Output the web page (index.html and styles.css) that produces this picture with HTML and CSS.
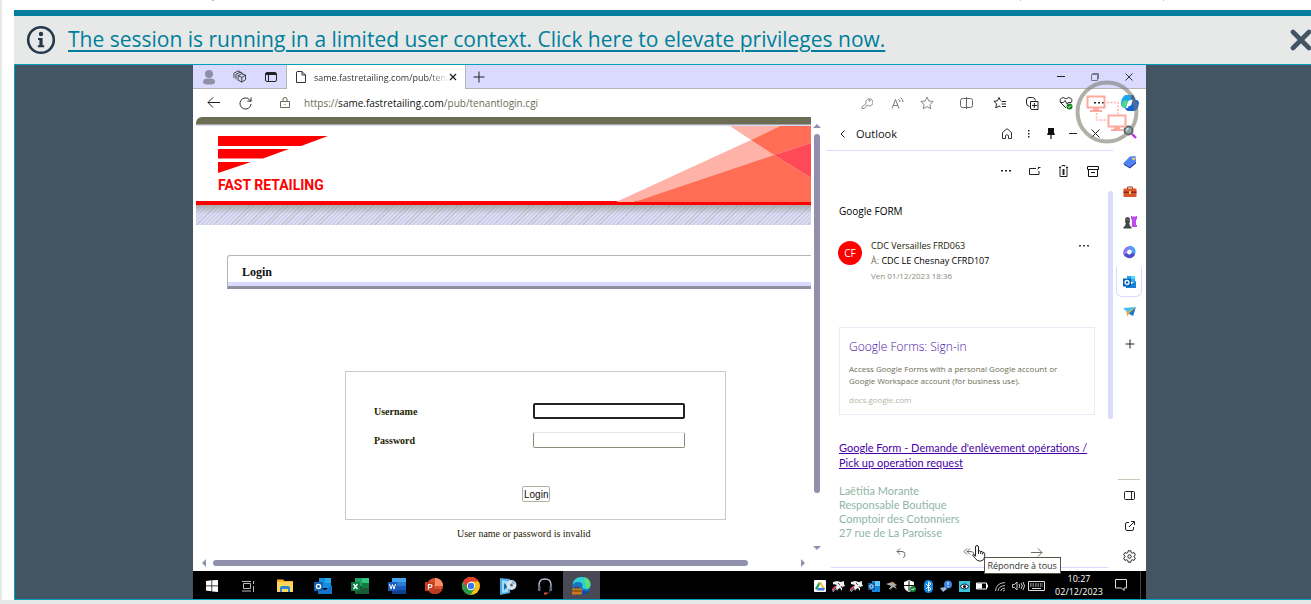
FILE: index.html
```
<!DOCTYPE html>
<html lang="en">
<head>
<meta charset="utf-8">
<meta name="viewport" content="width=device-width, initial-scale=1">
<title>Remote support session</title>
<link rel="stylesheet" href="styles.css">
</head>
<body>
<div class="console">
  <div class="topstrip"></div>
  <div class="banner">
    <svg class="info" width="30" height="30" viewBox="0 0 30 30"><circle cx="15" cy="15" r="12.8" fill="none" stroke="#22394c" stroke-width="2.6"/><circle cx="15" cy="9" r="2.2" fill="#22394c"/><path d="M12 13h4.6v7.2h1.6v2H11.8v-2h1.6V15H12z" fill="#22394c"/></svg>
    <a href="#elevate">The session is running in a limited user context. Click here to elevate privileges now.</a>
    <button class="close" aria-label="Close"><svg width="22" height="22" viewBox="0 0 22 22"><path d="M3 3l16 16M19 3L3 19" stroke="#435563" stroke-width="4.6" stroke-linecap="round"/></svg></button>
  </div>
  <div class="viewer">
    <div class="remote">
      <div class="tabbar">
        <button class="slot tabslot" aria-label="Profile"><svg width="14" height="16" viewBox="0 0 14 16" fill="#8f8fa8"><circle cx="7" cy="5" r="4"/><path d="M1 13c0-3 2-3.500 6-3.500s6 .5 6 3.500c0 2-2 2.500-6 2.500S1 15 1 13z"/></svg></button>
        <button class="slot tabslot" aria-label="Workspaces"><svg width="13" height="13" viewBox="0 0 14 14" fill="none" stroke="#333"><path d="M5.500 6L9.500 4l4 1.500v5L9.500 13l-4-2zM5.500 6l4 2v5M9.500 8l4-2.500M3.200 10V4.700L7.500 2.500l3 1M1 8.500V3.500L5.500 1l2.500.8"/></svg></button>
        <button class="slot tabslot" aria-label="Tab actions"><svg width="12" height="12" viewBox="0 0 12 12" fill="none" stroke="#222"><rect x=".5" y="1.500" width="11" height="9" rx="1.500"/><path d="M1 3h10" stroke-width="2"/><path d="M3.500 3v7.500"/></svg></button>
        <div class="tab">
          <svg width="10" height="12" viewBox="0 0 10 12" fill="none" stroke="#333"><path d="M1 .5h5L9.500 4v7.500H.5V1zM6 .5V4h3.500"/></svg>
          <span class="tabtitle">same.fastretailing.com/pub/tena</span>
          <button class="plain" aria-label="Close tab"><svg width="8" height="8" viewBox="0 0 8 8" stroke="#222" stroke-width="1.300"><path d="M1 1l6 6M7 1L1 7"/></svg></button>
        </div>
        <button class="slot newtab" aria-label="New tab"><svg width="12" height="12" viewBox="0 0 12 12" stroke="#222"><path d="M6 .5v11M.5 6h11"/></svg></button>
        <div class="push"></div>
        <button class="slot win" aria-label="Minimize"><svg width="8" height="8" viewBox="0 0 8 8" stroke="#222"><path d="M0 3.500h8"/></svg></button>
        <button class="slot win" aria-label="Restore"><svg width="8" height="8" viewBox="0 0 8 8" fill="none" stroke="#77778c"><path d="M.5 1.500h6v6h-6zM1.500 .5h6V6"/></svg></button>
        <button class="slot win" aria-label="Close window"><svg width="8" height="8" viewBox="0 0 8 8" stroke="#333"><path d="M.5 .5l7 7M7.500 .5l-7 7"/></svg></button>
      </div>
      <div class="toolbar">
        <button class="slot nav" aria-label="Back"><svg width="13" height="12" viewBox="0 0 13 12" fill="none" stroke="#222"><path d="M13 5.500H1M6 .5L1 5.500l5 5"/></svg></button>
        <button class="slot nav" aria-label="Reload"><svg width="13" height="13" viewBox="0 0 14 14" fill="none" stroke="#222"><path d="M13 7.500A6 6 0 1 1 11.500 3L13 4.500M13 .5v4H9"/></svg></button>
        <span class="slot lock"><svg width="10" height="12" viewBox="0 0 10 12" fill="none" stroke="#6d6d55"><path d="M.5 4.500h9v6h-9zM3 4.500V2q0-1.500 2-1.500T7 2v2.500M4.500 7.500h1"/></svg></span>
        <span class="url">https://<b>same.fastretailing.com</b>/pub/tenantlogin.cgi</span>
        <div class="push"></div>
        <button class="slot t30" aria-label="Passwords"><svg width="12" height="12" viewBox="0 0 12 12" fill="none" stroke="#8c8c80"><path d="M5 6.500L1 10v1.500h2.500L6 8a3.600 3.600 0 1 0-1-1.500z"/><circle cx="8.500" cy="3.500" r=".7"/></svg></button>
        <button class="slot t30" aria-label="Read aloud"><svg width="13" height="12" viewBox="0 0 13 12" fill="none" stroke="#777"><path d="M1 11.500L4.500 2.500 8 11.500M2.200 8.500h4.600M7.500 2q1.500 1 1.500 3M9.500 .5Q12 2 12 5"/></svg></button>
        <button class="slot t30" aria-label="Favorite"><svg width="14" height="14" viewBox="0 0 14 14" fill="none" stroke="#888"><path d="M7 1l1.800 4 4.400.5-3.300 3 .9 4.300L7 10.600l-3.800 2.200.9-4.300-3.300-3L5.200 5z"/></svg></button>
        <div class="toolgap"></div>
        <button class="slot t33" aria-label="Split screen"><svg width="13" height="12" viewBox="0 0 13 12" fill="none" stroke="#666"><path d="M6.500 1.500h-4q-2 0-2 2v5q0 2 2 2h4M6.500 1.500h4q2 0 2 2v5q0 2-2 2h-4M6.500 0v12"/></svg></button>
        <button class="slot t33" aria-label="Favorites"><svg width="14" height="14" viewBox="0 0 14 14" fill="none" stroke="#222"><path d="M8.500 5.500h4.500M8.500 8h4.500M9 10.500h4M7.500 4.500L6 1.500 4.500 4.800 1 5.300l2.500 2.600-.7 4L6 10l1.500.8"/></svg></button>
        <button class="slot t33" aria-label="Collections"><svg width="13" height="13" viewBox="0 0 13 13" fill="none" stroke="#222"><path d="M3.500 9.500Q.5 9 .5 6V3q0-2.500 2.500-2.500h3.500Q9 .5 9.500 3.500M4.500 4.500h7.500v8H6q-1.500 0-1.500-1.500zM8.300 6v5M6 8.500h5"/></svg></button>
        <button class="slot t33" aria-label="Browser essentials"><svg width="14" height="14" viewBox="0 0 14 14" fill="none" stroke="#333"><path d="M7 12L1.500 6.500Q0 3.500 2.500 2 5 .8 7 3q2-2.200 4.500-1Q14 3.500 12.500 6.500M1 6.500h3.500L6 4.500 8 8l1-1.500h3"/><circle cx="10.500" cy="10.500" r="3" fill="#12841c" stroke="none"/><path d="M9 10.500l1 1 2-2" stroke="#fff"/></svg></button>
        <button class="slot t33" aria-label="More"><svg width="12" height="4" viewBox="0 0 12 4" fill="#222"><path d="M1 1h2v1.500H1zM5 1h2v1.500H5zM9 1h2v1.500H9z"/></svg></button>
        <button class="slot side" aria-label="Copilot"><svg width="18" height="16" viewBox="0 0 18 16"><path d="M4 0h7q2 0 2.500 2L15 6H7L5 13Q0 13 0 9q0-6 4-9z" fill="#1aa7ec"/><path d="M3 5l4 1-2 6q-4 1-5-2z" fill="#52d68b"/><path d="M9 5h7q2 1 2 3-1 8-5 8H7q-2 0-3-3h3z" fill="#1663d6"/><path d="M8 5.500l4-1-2 6-4 1z" fill="#fff"/><path d="M11 0q2 0 3 5l-4-1z" fill="#123ea8"/></svg></button>
      </div>
      <div class="main">
        <div class="webcol">
          <div class="webrow">
            <div class="web">
              <div class="olive"></div>
              <div class="brand">
                <div class="logo">
                  <svg width="110" height="37" viewBox="0 0 110 37" fill="#fe0000"><path d="M0 0h110L83 10H0zM0 13h71L45 22.500H0zM0 26h33L0 37z"/></svg>
                  <span>FAST RETAILING</span>
                </div>
                <svg class="art" width="195" height="76" viewBox="0 0 195 76"><path d="M0 76L135 14l23 15L18 76zM114 0h50l-29 14z" fill="#ffb3a8"/><path d="M135 14l29-14h31v17l-37 12zM18 76l140-47 37 23v24z" fill="#ff6d55"/><path d="M158 29l37-12v35z" fill="#ff4957"/></svg>
              </div>
              <div class="redline"></div>
              <div class="hatch"></div>
              <h1 class="heading">Login</h1>
              <form class="login">
                <label for="user">Username</label><input id="user" class="focus" type="text">
                <label for="pass">Password</label><input id="pass" type="password">
                <button type="button">Login</button>
              </form>
              <p class="error">User name or password is invalid</p>
            </div>
            <div class="vscroll"><svg width="8" height="4" viewBox="0 0 8 4"><path d="M4 0l4 4H0z" fill="#9090ad"/></svg><div class="vthumb"></div><svg width="8" height="4" viewBox="0 0 8 4"><path d="M0 0h8L4 4z" fill="#9090ad"/></svg></div>
          </div>
          <div class="hscroll"><svg width="4" height="8" viewBox="0 0 4 8"><path d="M4 0v8L0 4z" fill="#9090ad"/></svg><div class="hthumb"></div><svg width="4" height="8" viewBox="0 0 4 8"><path d="M0 0l4 4-4 4z" fill="#9090ad"/></svg></div>
        </div>
        <section class="outlook">
          <header class="ohead">
            <button class="slot o22" aria-label="Back"><svg width="5" height="8" viewBox="0 0 5 8" fill="none" stroke="#222"><path d="M4.500 .5L1 4l3.500 3.500"/></svg></button>
            <span class="otitle">Outlook</span>
            <div class="push"></div>
            <button class="slot o22" aria-label="Home"><svg width="10" height="11" viewBox="0 0 10 11" fill="none" stroke="#333"><path d="M.5 4.500L5 .7l4.500 3.800v6h-3V7.500Q5 6 3.500 7.500v3h-3z"/></svg></button>
            <button class="slot o22" aria-label="Menu"><svg width="2" height="8" viewBox="0 0 2 8" fill="#222"><path d="M0 0h1.500v1.500H0zM0 3h1.500v1.500H0zM0 6h1.500v1.500H0z"/></svg></button>
            <button class="slot o22" aria-label="Pin"><svg width="8" height="11" viewBox="0 0 8 11"><path d="M1 0h6v4.500l1 2.500H4.600v4H3.400V7H0l1-2.500z" fill="#111"/></svg></button>
            <button class="slot o22" aria-label="Minimize pane"><svg width="8" height="8" viewBox="0 0 8 8" stroke="#222"><path d="M0 3.500h8"/></svg></button>
            <button class="slot o22" aria-label="Close pane"><svg width="9" height="9" viewBox="0 0 9 9" stroke="#222"><path d="M.5 .5l8 8M8.500 .5l-8 8"/></svg></button>
          </header>
          <div class="oacts">
            <button class="slot o29" aria-label="More"><svg width="10" height="2" viewBox="0 0 10 2" fill="#222"><path d="M0 0h2v1.500H0zM4 0h2v1.500H4zM8 0h2v1.500H8z"/></svg></button>
            <button class="slot o29" aria-label="Open in window"><svg width="12" height="10" viewBox="0 0 12 10" fill="none" stroke="#222"><path d="M7 2.500H.5v6h9.500V5M8.500 3.500l2-2M9 1.500h2.500"/></svg></button>
            <button class="slot o29" aria-label="Delete"><svg width="9" height="12" viewBox="0 0 9 12" fill="none" stroke="#222"><path d="M1 1.500v10h7v-10M0 2.500h2M7 2.500h2M3 1.500V.5h3v1"/><path d="M4.500 4v6" stroke-width="2"/></svg></button>
            <button class="slot o29" aria-label="Archive"><svg width="12" height="11" viewBox="0 0 12 11" fill="none" stroke="#111"><path d="M.5 .5h11v3H.5zM1.500 3.500v7h9v-7M4 6.500h4"/></svg></button>
          </div>
          <div class="obody">
            <div class="mail">
              <h2>Google FORM</h2>
              <div class="sender">
                <span class="avatar">CF</span>
                <div class="who"><div>CDC Versailles FRD063</div><div class="to"><span>À:</span> CDC LE Chesnay CFRD107</div><div class="date">Ven 01/12/2023 18:36</div></div>
                <button class="plain dots" aria-label="Message actions"><svg width="10" height="2" viewBox="0 0 10 2" fill="#444"><path d="M0 0h2v1.500H0zM4 0h2v1.500H4zM8 0h2v1.500H8z"/></svg></button>
              </div>
              <article class="card">
                <h3>Google Forms: Sign-in</h3>
                <p>Access Google Forms with a personal Google account or Google Workspace account (for business use).</p>
                <small>docs.google.com</small>
              </article>
              <a class="formlink" href="#form">Google Form - Demande d'enlèvement opérations / Pick up operation request</a>
              <div class="sign">Laëtitia Morante<br>Responsable Boutique<br>Comptoir des Cotonniers<br>27 rue de La Paroisse</div>
            </div>
            <div class="othumb"></div>
          </div>
          <footer class="ofoot">
            <button class="plain" aria-label="Reply"><svg width="10" height="10" viewBox="0 0 10 10" fill="none" stroke="#6d6d60"><path d="M4 .5L1 3.500l3 3M1 3.500h5q3 0 3 3T7 9.500"/></svg></button>
            <div class="replyall"><button class="plain" aria-label="Reply all"><svg width="12" height="10" viewBox="0 0 12 10" fill="none" stroke="#6d6d60"><path d="M4 .5L1 3.500l3 3M7 .5L4 3.500l3 3M4 3.500h4q3 0 3.500 4"/></svg></button>
              <svg class="hand" width="15" height="17" viewBox="0 0 15 17"><path d="M4.500 11V2q0-1.500 1.500-1.500T7.500 2v4q1.500-.8 2.200.5 1.600-.5 2 .8 1.800-.3 2 1.200v3q0 4-4 4.500H8q-2 0-3.500-2.500L1.500 10q0-1.500 3 1z" fill="#fff" stroke="#222"/><path d="M7.500 6v3M9.700 6.500V9M11.700 7.500V9.500" stroke="#222"/></svg>
              <span class="tip" role="tooltip">Répondre à tous</span>
            </div>
            <button class="plain" aria-label="Forward"><svg width="12" height="10" viewBox="0 0 12 10" fill="none" stroke="#6d6d60"><path d="M0 4.500h11M7 .5l4 4-4 4"/></svg></button>
          </footer>
        </section>
        <nav class="rail">
          <button class="slot" aria-label="Search"><svg width="14" height="14" viewBox="0 0 14 14"><circle cx="5.500" cy="5.500" r="4" fill="#b8dce8" stroke="#555f68" stroke-width="2"/><path d="M9 9l4 4" stroke="#c22fe0" stroke-width="2.400"/></svg></button>
          <button class="slot" aria-label="Shopping"><svg width="14" height="14" viewBox="0 0 14 14"><path d="M7 1.500L12.500 1l.5 5.500-6.500 5L.5 8z" fill="#4d84f2"/><path d="M.5 8l6 3.500 6.500-5v2l-6 5L1 10z" fill="#274bb8"/><circle cx="10.500" cy="3.800" r="1.400" fill="#ffd54d"/></svg></button>
          <button class="slot" aria-label="Tools"><svg width="14" height="12" viewBox="0 0 14 12"><path d="M4.500 3V1h5v2" fill="none" stroke="#9b3418"/><rect x=".5" y="2.500" width="13" height="8.500" rx="1" fill="#d9532c"/><path d="M.5 5.500h13V7H.5z" fill="#8e2b16"/><path d="M6 5h2v3H6z" fill="#ffc861"/></svg></button>
          <button class="slot" aria-label="Games"><svg width="14" height="14" viewBox="0 0 14 14"><path d="M8 1h1.500v1h1V1h1v1h1V1H14v3l-1 1v5h1v2H9V5L8 4z" fill="#bd4cf0"/><circle cx="4.500" cy="4.500" r="2.500" fill="#555"/><path d="M2 6h5v1.500H6L7 11l1.500 1v1.500H.5V12L2 11l1-3.500H2z" fill="#444"/></svg></button>
          <button class="slot" aria-label="Microsoft 365"><svg width="13" height="14" viewBox="0 0 13 14" fill="none" stroke-width="3.600"><path d="M3.500 10.500Q1 8.500 2.500 5.500 4 3 7 2.500" stroke="#8b7cf0"/><path d="M6.500 2.500Q10.500 3 10.800 6.500q0 1.500-.8 3" stroke="#4b9ff2"/><path d="M10.500 8.500Q8.500 12 5.500 11.200 3.500 10.500 2.500 9" stroke="#4d4fc4"/></svg></button>
          <button class="slot active" aria-label="Outlook"><svg width="13" height="12" viewBox="0 0 13 12"><path d="M4 0h8v6H4z" fill="#28a8ea"/><path d="M3 5l5 3 5-3v7H3z" fill="#1683d8"/><path d="M8 0h4v3H8z" fill="#50d9ff"/><rect y="2.500" width="8" height="8" fill="#0a61b8"/><circle cx="4" cy="6.500" r="2" fill="none" stroke="#fff" stroke-width="1.300"/></svg></button>
          <button class="slot" aria-label="Drop"><svg width="13" height="10" viewBox="0 0 14 11"><path d="M0 1l14-1-9 6z" fill="#3cc3ef"/><path d="M14 0l-3 10-6-3z" fill="#1f77dc"/><path d="M0 2l4 4L14 0 6 7.500 4.500 11 4 7z" fill="#f6a821"/></svg></button>
          <button class="slot add" aria-label="Add"><svg width="10" height="10" viewBox="0 0 10 10" stroke="#222"><path d="M5 .5v9M.5 5h9"/></svg></button>
          <div class="push"></div>
          <button class="slot ruled" aria-label="Hide sidebar"><svg width="11" height="9" viewBox="0 0 11 9" fill="none" stroke="#222"><rect x=".5" y=".5" width="10" height="8" rx="1"/><path d="M7.500 .5v8"/></svg></button>
          <button class="slot" aria-label="Open in new window"><svg width="10" height="10" viewBox="0 0 10 10" fill="none" stroke="#222"><path d="M4 1.500H2Q.5 1.500 .5 3v5q0 1.500 1.500 1.500h5q1.500 0 1.500-1.500V6M4 6l5-5M6 .5h3.500V4"/></svg></button>
          <button class="slot" aria-label="Settings"><svg width="13" height="13" viewBox="0 0 13 13" fill="none" stroke="#222"><path d="M5.200.8h2.600l.4 1.800 1.200.6 1.700-.6 1.300 2.200-1.300 1.300v.8l1.300 1.300-1.300 2.200-1.700-.6-1.200.6-.4 1.800H5.200l-.4-1.800-1.200-.6-1.700.6L.6 8.200l1.300-1.300v-.8L.6 4.800l1.300-2.200 1.700.6 1.200-.6z"/><circle cx="6.500" cy="6.500" r="1.700"/></svg></button>
        </nav>
      </div>
      <div class="taskbar">
        <button class="slot app" aria-label="Start"><svg width="12" height="12" viewBox="0 0 12 12" fill="#fff"><path d="M0 1l5.500-.7v5.200H0zM6.200.2L12 0v5.500H6.200zM0 6.200h5.500v5L0 10.500zM6.200 6.200H12V12l-5.800-.6z"/></svg></button>
        <button class="slot app" aria-label="Task view"><svg width="13" height="11" viewBox="0 0 13 11" fill="none" stroke="#bbb"><path d="M1.500 2.500h7v5h-7zM0 .5h9M0 10h9M11.500 0v3M11.500 5v6"/></svg></button>
        <button class="slot app" aria-label="File Explorer"><svg width="17" height="14" viewBox="0 0 17 14"><path d="M0 .5h6l1.500 1.500H16V13H0z" fill="#ffb31a"/><path d="M0 3h16v10H0z" fill="#ffd65c"/><path d="M3 13V9q0-2 2-2h6q2 0 2 2v4h-2v-3H5v3z" fill="#2a87d0"/></svg></button>
        <button class="slot app" aria-label="Outlook"><svg width="18" height="16" viewBox="0 0 18 16"><path d="M5 0h12v10H5z" fill="#1490df"/><path d="M11 0h6v5h-6z" fill="#28a8ea"/><path d="M4 9l7 3 7-5v9H4z" fill="#1474c9"/><rect y="4" width="9" height="9" fill="#0f5eb0"/><circle cx="4.500" cy="8.500" r="2.100" fill="none" stroke="#fff" stroke-width="1.400"/></svg></button>
        <button class="slot app" aria-label="Excel"><svg width="18" height="16" viewBox="0 0 18 16"><path d="M4 0h14v16H4z" fill="#185c37"/><path d="M4 0h7v8H4z" fill="#21a366"/><path d="M11 0h7v5h-7z" fill="#33c481"/><path d="M11 5h7v5h-7z" fill="#107c41"/><rect y="4" width="9" height="9" fill="#107c41"/><path d="M2.500 6l4 5M6.500 6l-4 5" stroke="#fff" stroke-width="1.300"/></svg></button>
        <button class="slot app" aria-label="Word"><svg width="18" height="16" viewBox="0 0 18 16"><path d="M4 0h14v16H4z" fill="#103f91"/><path d="M4 0h14v4H4z" fill="#41a5ee"/><path d="M4 4h14v4H4z" fill="#2b7cd3"/><path d="M4 8h14v4H4z" fill="#185abd"/><rect y="4" width="9" height="9" fill="#185abd"/><path d="M1.500 6l1.500 5 1.500-4.500L6 11l1.500-5" fill="none" stroke="#fff"/></svg></button>
        <button class="slot app" aria-label="PowerPoint"><svg width="18" height="16" viewBox="0 0 18 16"><circle cx="10" cy="8" r="8" fill="#d35230"/><path d="M10 0a8 8 0 0 1 8 8h-8z" fill="#ff8f6b"/><path d="M2.500 11h15a8 8 0 0 1-15 0z" fill="#b83b1d"/><rect y="4" width="9" height="9" fill="#c43e1c"/><path d="M3.500 11.500v-5H5q2 0 2 1.500T5 9.500H3.500" fill="none" stroke="#fff" stroke-width="1.200"/></svg></button>
        <button class="slot app" aria-label="Chrome"><svg width="18" height="18" viewBox="0 0 18 18"><circle cx="9" cy="9" r="9" fill="#fbc116"/><path d="M1.200 4.500A9 9 0 0 0 8.500 18L13 11 9 9z" fill="#269b4a"/><path d="M1.200 4.500A9 9 0 0 1 16.800 4.500H9L5 11z" fill="#e33b2e"/><circle cx="9" cy="9" r="4.200" fill="#fff"/><circle cx="9" cy="9" r="3.200" fill="#3b78e7"/></svg></button>
        <button class="slot app" aria-label="Media tool"><svg width="18" height="17" viewBox="0 0 18 17"><path d="M1 0l10 1v14L1 17z" fill="#4da7e0"/><path d="M3 2l6 1v11l-6 1z" fill="#9bdcf8"/><path d="M5 5v7l4-3.500z" fill="#1c6aa8"/><circle cx="12.500" cy="7" r="5" fill="#dbe4ec"/><circle cx="12.500" cy="7" r="1.500" fill="#547185"/><path d="M13 2l4 3-4 2z" fill="#91b8d2"/></svg></button>
        <button class="slot app" aria-label="Headset"><svg width="16" height="17" viewBox="0 0 16 17" fill="none"><path d="M2 10V7q0-6 6-6t6 6v3" stroke="#b6bed2" stroke-width="1.400"/><path d="M2.200 8v5M13.800 8v5" stroke="#606783" stroke-width="2.600"/><path d="M13 13q-1 2.500-4 2.500" stroke="#555"/><path d="M7 15.500h3" stroke="#e4512d" stroke-width="2"/></svg></button>
        <button class="slot app on" aria-label="Edge"><svg width="19" height="18" viewBox="0 0 19 18"><circle cx="9.500" cy="9" r="9" fill="#1673c8"/><path d="M.5 8Q1.500 0 9.500 0 18.500 0 18.500 8q-.5 4-5 4-4 0-3-3 0-4-4-4Q2 5 .5 8z" fill="#2ed0d0"/><path d="M12 .3Q18.500 2 18.500 8q-.5 4-5 4 1-2 0-5z" fill="#5be074"/><path d="M6 10q0 5 11 4-3 4-8 4-5-1-3-8z" fill="#0d499f"/><rect y="11.500" width="10" height="6" fill="#c97920"/><path d="M0 14h10M3.500 11.500V10h3v1.500" fill="none" stroke="#6d3b08"/></svg></button>
        <div class="push"></div>
        <span class="slot tray"><svg width="12" height="12" viewBox="0 0 12 12"><rect width="12" height="12" rx="1" fill="#fff"/><path d="M5 2h2l4 7H9z" fill="#f9bd12"/><path d="M5 2l1 2-3 6-2-1.500z" fill="#169c55"/><path d="M4 8h7l-1 2.500H3z" fill="#3a79e8"/></svg></span>
        <span class="slot tray"><svg width="13" height="12" viewBox="0 0 13 12"><path d="M0 11q2-4 6-5" stroke="#e74b63" stroke-width="2" fill="none"/><path d="M1 12q2-4 6-4" stroke="#50bfd5" fill="none"/><path d="M1 2l4-1 4 1 3-1v3l1 2-3 1v4L8 8 6 9l-1 2-1-4 1-2-4-1z" fill="#eee"/><path d="M6 3l2 2M9 6l1 2" stroke="#444"/></svg></span>
        <span class="slot tray"><svg width="13" height="12" viewBox="0 0 13 12"><path d="M0 11q2-4 6-5" stroke="#e74b63" stroke-width="2" fill="none"/><path d="M1 12q2-4 6-4" stroke="#50bfd5" fill="none"/><path d="M1 2l4-1 4 1 3-1v3l1 2-3 1v4L8 8 6 9l-1 2-1-4 1-2-4-1z" fill="#eee"/><path d="M6 3l2 2M9 6l1 2" stroke="#444"/></svg></span>
        <span class="slot tray"><svg width="12" height="11" viewBox="0 0 12 11"><path d="M4 0h8v11H4z" fill="#1686db"/><path d="M7 0h5v5H7z" fill="#64c8f6"/><rect y="2" width="7" height="7" fill="#0d5ba8"/><circle cx="3.500" cy="5.500" r="1.700" fill="none" stroke="#fff"/></svg></span>
        <span class="slot tray"><svg width="12" height="10" viewBox="0 0 12 10"><path d="M0 3l6-2 5 3-2 1 2 3-4-2-3 3 1-4z" fill="#aaa"/><path d="M6 1l3 2M3 8l2-2" stroke="#d69a35"/></svg></span>
        <span class="slot tray"><svg width="12" height="12" viewBox="0 0 12 12"><path d="M5 0l5 2v4q0 4-5 6Q0 10 0 6V2z" fill="#fff"/><path d="M5 1v10M0 5.500h10" stroke="#111"/><circle cx="9" cy="9" r="3" fill="#168b35"/><path d="M7.500 9l1 1 2-2" fill="none" stroke="#fff"/></svg></span>
        <span class="slot tray"><svg width="9" height="13" viewBox="0 0 9 13"><rect width="9" height="13" rx="4.500" fill="#118be5"/><path d="M2 4l5 5-2.500 2V2L7 4 2 9" fill="none" stroke="#fff"/></svg></span>
        <span class="slot tray"><svg width="12" height="12" viewBox="0 0 12 12"><circle cx="8" cy="4.500" r="4" fill="#3f83df"/><path d="M8 2v3M8 6v1" stroke="#fff"/><path d="M0 8l5-1 2 2-4 3z" fill="#9bb6d4"/></svg></span>
        <span class="slot tray"><svg width="11" height="11" viewBox="0 0 11 11"><rect width="11" height="11" fill="#39c4d8"/><path d="M1 5.500q4.500-5 9 0-4.500 5-9 0z" fill="#fff" stroke="#113"/><circle cx="5.500" cy="5.500" r="1.600" fill="#111"/></svg></span>
        <span class="slot tray"><svg width="12" height="8" viewBox="0 0 12 8"><path d="M.5 1h10v6H.5z" fill="none" stroke="#fff"/><path d="M1 1.500h5v5H1zM11 2.500h1v3h-1z" fill="#fff"/></svg></span>
        <span class="slot tray"><svg width="11" height="11" viewBox="0 0 11 11" fill="none" stroke="#bbb"><path d="M.5 10Q1 2 10 1.500M3 10q.5-5 7-5.500M5.500 10q.5-2.500 4.500-3M8 10l2-1"/></svg></span>
        <span class="slot tray"><svg width="13" height="10" viewBox="0 0 13 10" fill="none" stroke="#ccc"><path d="M.5 3.500h2L5 1v8L2.500 6.500h-2zM7 3q1.500 2 0 4M9 2q2.500 3 0 6M11 1q3 4 0 8"/></svg></span>
        <span class="slot tray"><svg width="17" height="10" viewBox="0 0 17 10" fill="none" stroke="#ddd"><path d="M.5 .5h16v9H.5z"/><path d="M2 3h13M2 5h13" stroke-dasharray="1.500 1"/><path d="M4 7.500h9"/></svg></span>
        <div class="clock"><span>10:27</span><span>02/12/2023</span></div>
        <button class="slot notif" aria-label="Notifications"><svg width="12" height="12" viewBox="0 0 12 12" fill="none" stroke="#ddd"><path d="M.5 .5h11v8.500H9v2.500L6.500 9h-6z"/></svg></button>
      </div>
      <svg class="badge" width="64" height="64" viewBox="0 0 64 64" fill="none"><circle cx="32" cy="32" r="29.500" stroke="#77776b" stroke-opacity=".58" stroke-width="4"/><path d="M12.500 16.500h17v11h-17zM33.500 35.500h17v11h-17z" stroke="#ffa99e" stroke-width="2"/><path d="M18 28h6v2h3v2H15v-2h3zM39 47h6v2h3v2H36v-2h3z" fill="#ffa99e"/><path d="M32 22.500h11V34M21.500 33v7H32" stroke="#ffb3a8" stroke-width="1.500" stroke-dasharray="2 1.500"/></svg>
    </div>
  </div>
  <div class="bottomstrip"></div>
</div>
</body>
</html>
```
FILE: styles.css
```
* { box-sizing: border-box; }
body { margin: 0; font-family: "Open Sans", "Noto Sans", sans-serif; background: #fff; overflow: hidden; }
svg { display: block; flex: none; }
button { border: 0; padding: 0; background: none; font: inherit; color: inherit; }
.push { flex: 1; }
.console { display: flex; flex-direction: column; height: 100vh; border-left: 2px solid #e7e8e8; }
.topstrip {
  height: 10px; flex: none;
  background: linear-gradient(#c9b9b4, #c9b9b4) 210px 0 / 2px 1px no-repeat, linear-gradient(#a9bcc4, #a9bcc4) 1018px 0 / 1px 1px no-repeat, linear-gradient(#a9bcc4, #a9bcc4) 1161px 0 / 1px 1px no-repeat;
}
.banner { display: flex; align-items: center; flex: none; height: 54px; margin-left: 12px; padding-left: 12px; border-top: 6px solid #007e9c; background: #e7e9e8; overflow: hidden; }
.banner a { margin-left: 12px; padding-bottom: 2px; color: #007e9c; font-size: 21px; line-height: 28px; font-weight: 400; white-space: nowrap; text-decoration-thickness: 2px; text-underline-offset: 3px; }
.close { margin-left: auto; margin-right: -1px; }
.viewer { display: flex; flex: 1; min-height: 0; margin-left: 12px; padding: 0 165px 0 178px; background: #435563; border: solid #009fc0; border-width: 1px 0 1px 1px; }
.bottomstrip { height: 4px; flex: none; background: #e7e9e8; }
.remote { position: relative; display: flex; flex-direction: column; flex: 1; min-width: 0; background: #fff; }
.slot { display: flex; align-items: center; justify-content: center; flex: none; }

.tabbar { display: flex; flex: none; height: 24px; background: #dadaff; border-bottom: 1px solid #b5b5b5; }
.tabslot { width: 31px; }
.tab { display: flex; align-items: center; gap: 8px; width: 180px; height: 24px; padding: 0 8px 0 9px; background: #fff; border: solid #b5b5b5; border-width: 0 1px; font-size: 9px; color: #333; }
.tab .plain { flex: none; margin-left: -8px; }
.tabtitle { flex: 1; min-width: 0; white-space: nowrap; -webkit-mask-image: linear-gradient(90deg, #000 85%, transparent); mask-image: linear-gradient(90deg, #000 85%, transparent); }
.newtab { width: 26px; }
.win { width: 34px; }
.toolbar { display: flex; align-items: center; flex: none; height: 28px; padding: 0 1px 0 4px; }
.nav { width: 32px; }
.lock { width: 32px; margin: 0 3px 0 8px; }
.url { font-size: 10px; color: #6d6d55; white-space: nowrap; }
.url b { font-weight: 500; color: #111; }
.t30 { width: 30px; }
.t33 { width: 33px; }
.toolgap { width: 8px; }
.side { width: 30px; }

.main { display: flex; flex: 1; min-height: 0; }
.webcol { display: flex; flex-direction: column; flex: 1; min-width: 0; padding-left: 3px; }
.webrow { display: flex; flex: 1; min-height: 0; }
.web { flex: 1; min-width: 0; overflow: hidden; font-family: "Liberation Serif", serif; }
.olive { height: 8px; background: #6d6d55; border-bottom: 1px solid #a5a59b; border-top-left-radius: 6px; }
.brand { display: flex; justify-content: space-between; height: 76px; border-top: 1px solid #dadaff; }
.logo { padding: 10px 0 0 22px; color: #fe0000; font: 700 14px/16px Roboto, sans-serif; }
.logo span { display: block; margin-top: 4px; white-space: nowrap; }
.redline { height: 4px; background: #fe0000; }
.hatch { height: 20px; background: linear-gradient(rgba(130, 130, 110, .5), transparent 9px), repeating-linear-gradient(135deg, #dadafa 0 2px, #c6c6cc 2px 3px); }
.heading { height: 34px; margin: 30px 0 0 31px; padding-left: 14px; border: 1px solid #b5b5b5; border-right: 0; border-bottom: 3px solid #8f8fa0; border-radius: 3px 0 0 0; box-shadow: inset 0 -4px #dadaff; font-size: 12px; line-height: 32px; color: #111; }
.login { display: grid; grid-template-columns: 159px 152px; grid-template-rows: 16px 16px 41px; row-gap: 13px; align-items: center; width: 381px; height: 149px; margin: 82px 0 0 149px; padding: 31px 0 0 28px; border: 1px solid #c8c8d2; font-size: 10px; font-weight: 700; color: #222200; }
.login input { width: 152px; height: 16px; padding: 0 2px; border: 1px solid #8c8c7d; border-top-color: #e7e7e7; border-radius: 2px; background: #fff; font-size: 10px; outline: 0; }
.login .focus { border: 2px solid #222; }
.login button { grid-column: 1 / 3; justify-self: start; align-self: end; height: 16px; margin-left: 148px; padding: 0 1px; border: 1px solid #b0b0a0; border-radius: 2px; font: 10px/13px "Liberation Sans", sans-serif; color: #111; }
.error { margin: 6px 0 0 261px; font-size: 10px; line-height: 16px; font-weight: 400; color: #222200; white-space: nowrap; }
.vscroll { display: flex; flex-direction: column; align-items: center; flex: none; width: 11px; padding: 7px 0 4px; }
.vthumb { flex: 0 1 359px; width: 6px; margin: 6px 0 auto; border-radius: 3px; background: #9090ad; }
.hscroll { display: flex; align-items: center; flex: none; height: 17px; padding: 0 17px 0 6px; }
.hthumb { flex: 0 1 535px; height: 6px; margin: 0 auto 0 7px; border-radius: 3px; background: #9090ad; }

.outlook { display: flex; flex-direction: column; flex: none; width: 291px; color: #111; }
.ohead { display: flex; align-items: center; flex: none; height: 34px; margin-left: 4px; padding: 0 7px 0 5px; border-bottom: 1px solid #dadaff; }
.otitle { margin-left: 3px; font-size: 11px; font-weight: 500; }
.o22 { width: 22px; height: 32px; }
.oacts { display: flex; justify-content: flex-end; flex: none; height: 40px; padding-right: 6px; }
.o29 { width: 29px; }
.obody { display: flex; flex: 1; min-height: 0; overflow: hidden; }
.mail { flex: 1; padding: 11px 13px 0 17px; }
.mail h2 { margin: 0; font-size: 10px; line-height: 18px; font-weight: 500; color: #000; }
.sender { display: flex; height: 72px; margin-top: 18px; font-size: 9px; line-height: 15px; white-space: nowrap; }
.avatar { display: flex; align-items: center; justify-content: center; width: 24px; height: 24px; margin: 3px 9px 0 -1px; border-radius: 50%; background: #fe0000; color: #fff; font-size: 10px; }
.who { flex: 1; color: #222200; }
.to { color: #000; }
.to span { color: #6d6d55; }
.date { font-size: 8px; color: #8c8c80; }
.dots { align-self: flex-start; padding: 7px 6px 0 0; }
.card { height: 88px; margin-top: 17px; padding: 9px 9px 0; border: 1px solid #ebebf8; }
.card h3 { margin: 0; font-size: 12px; line-height: 20px; font-weight: 300; color: #4b12a8; }
.card p { margin: 6px 20px 0 0; font-size: 8px; line-height: 12px; color: #6d6d55; }
.card small { display: block; margin-top: 7px; font-size: 8px; line-height: 12px; color: #b5b5a8; }
.formlink { display: block; margin: 25px -13px 0 0; font: 11px/15px Lato, sans-serif; color: #4800a8; }
.sign { margin-top: 14px; font: 11px/14px Lato, sans-serif; color: #8fb5a6; }
.othumb { flex: none; width: 5px; height: 228px; border-radius: 3px; background: #dadaff; }
.ofoot { display: flex; align-items: center; justify-content: space-between; flex: none; height: 29px; margin: 0 5px 3px 9px; padding: 0 65px; border-bottom: 1px solid #dadaff; }
.replyall { position: relative; display: flex; }
.hand { position: absolute; left: 8px; top: -3px; z-index: 2; }
.tip { position: absolute; left: 21px; top: 9px; padding: 0 3px; border: 1px solid #555544; background: #fff; font-size: 9px; line-height: 15px; white-space: nowrap; color: #333; }

.rail { display: flex; flex-direction: column; flex: none; width: 33px; }
.rail .slot { height: 30px; }
.rail .active { margin: 0 4px 0 3px; border: 1px solid #dadaff; border-top: 0; border-radius: 0 0 6px 6px; }
.rail .add { margin-top: 2px; }
.ruled { margin: 0 6px 0 5px; border-top: 1px solid #c8c8bb; }
.rail .ruled { height: 32px; }

.taskbar { display: flex; align-items: center; flex: none; height: 28px; padding-right: 5px; background: #000; color: #fff; }
.app { width: 37px; height: 28px; padding-top: 2px; }
.on { background: #494955; }
.tray { width: 18px; padding-top: 2px; }
.clock { display: flex; flex-direction: column; align-items: center; width: 60px; margin-left: 4px; font-size: 9px; line-height: 13px; }
.notif { width: 32px; height: 28px; border-right: 1px solid #444; padding-right: 8px; }
.badge { position: absolute; right: 7px; top: 15px; pointer-events: none; }
```
